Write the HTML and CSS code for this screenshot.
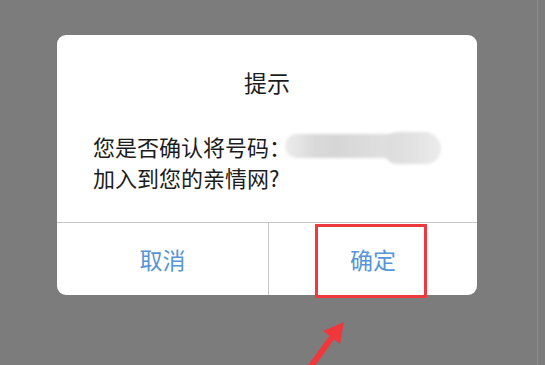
FILE: index.html
```html
<!DOCTYPE html>
<html lang="zh">
<head>
<meta charset="utf-8">
<link rel="stylesheet" href="styles.css">
</head>
<body>
<div class="screen">
  <div class="dialog">
    <div class="title">提示</div>
    <div class="message">
      <div class="line">您是否确认将号码：<span class="masked"><span class="pill"></span><span class="knob"></span></span></div>
      <div class="line">加入到您的亲情网?</div>
    </div>
    <div class="actions">
      <div class="btn">取消</div>
      <div class="btn btn-ok">确定</div>
    </div>
  </div>
  <div class="highlight"></div>
  <svg class="arrow" width="545" height="365" viewBox="0 0 545 365">
    <line x1="309" y1="369" x2="333" y2="336" stroke="#f0383c" stroke-width="6" stroke-linecap="round"/>
    <polygon points="344,322 323,331 340,344" fill="#f0383c"/>
  </svg>
</div>
</body>
</html>
```

FILE: styles.css
```css
html, body {
  margin: 0;
  padding: 0;
  background: #7c7c7c;
}
.screen {
  position: relative;
  width: 545px;
  height: 365px;
  overflow: hidden;
  font-family: "Noto Sans CJK SC", "Noto Sans", sans-serif;
  box-sizing: border-box;
  padding-top: 35px;
  padding-left: 57px;
}
.screen::after {
  content: "";
  position: absolute;
  left: 537px;
  top: 0;
  width: 1px;
  height: 365px;
  background: #8e8e8e;
}
.dialog {
  width: 420px;
  height: 260px;
  background: #fff;
  border-radius: 9px;
  display: flex;
  flex-direction: column;
  overflow: hidden;
}
.title {
  padding-top: 33px;
  font-size: 23px;
  line-height: 28px;
  text-align: center;
  color: #1c1c1c;
}
.message {
  padding: 35px 0 0 36px;
  font-size: 22px;
  line-height: 31px;
  color: #1c1c1c;
  flex: 1;
}
.line {
  white-space: nowrap;
}
.masked {
  display: inline-block;
  position: relative;
  width: 158px;
  height: 31px;
  vertical-align: top;
  margin-left: -6px;
}
.pill {
  position: absolute;
  left: 0;
  top: 3px;
  width: 118px;
  height: 24px;
  border-radius: 12px;
  background: linear-gradient(90deg, #ececec 0%, #e4e4e4 12%, #d9d9d9 25%, #d6d6d6 45%, #dcdcdc 70%, #e2e2e2 100%);
  filter: blur(1.5px);
}
.knob {
  position: absolute;
  left: 100px;
  top: 1px;
  width: 56px;
  height: 32px;
  border-radius: 16px 20px 18px 14px;
  background: linear-gradient(90deg, #dcdcdc 0%, #e2e2e2 50%, #ebebeb 100%);
  filter: blur(1.5px);
}
.actions {
  display: grid;
  grid-template-columns: 211px 1fr;
  height: 72px;
  border-top: 1px solid #c6c6c6;
}
.btn {
  display: flex;
  align-items: center;
  justify-content: center;
  font-size: 23px;
  color: #5696d6;
}
.btn-ok {
  border-left: 1px solid #c6c6c6;
}
.highlight {
  position: absolute;
  left: 315px;
  top: 224px;
  width: 112px;
  height: 74px;
  box-sizing: border-box;
  border: 3px solid #ec3a3e;
}
.arrow {
  position: absolute;
  left: 0;
  top: 0;
}
```
